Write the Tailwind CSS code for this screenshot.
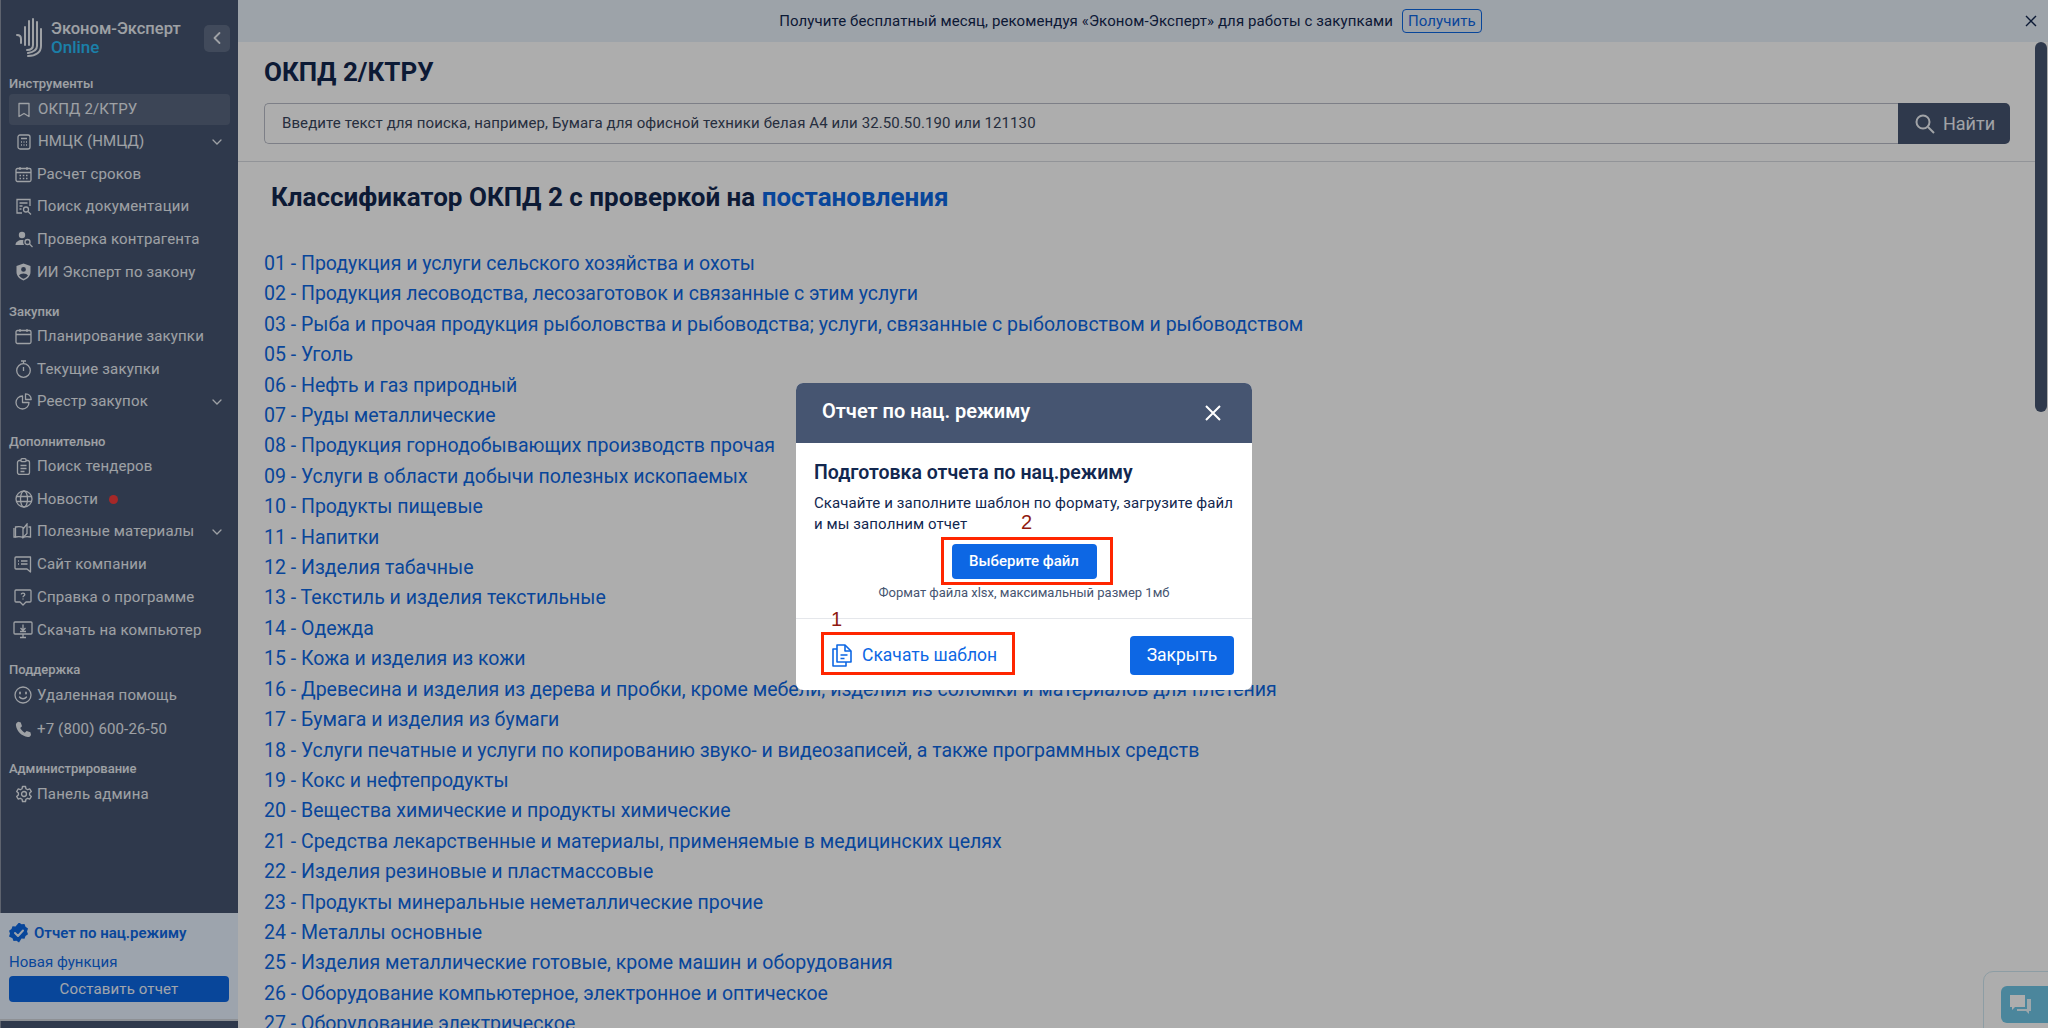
<!DOCTYPE html>
<html lang="ru">
<head>
  <meta charset="UTF-8" />
  <title>ОКПД 2/КТРУ</title>
  <script src="https://cdn.jsdelivr.net/npm/@tailwindcss/browser@4"></script>
</head>
<body class="font-['Roboto',sans-serif] text-[#12274f] bg-white">
<div class="relative flex h-[1028px] w-[2048px] overflow-hidden">

  <!-- sidebar -->
  <aside class="w-[238px] shrink-0 h-full bg-[#465571] border-l border-[#8b93a3] flex flex-col text-[#e9edf3]">
    <div class="flex items-center h-[74px] pl-[15px] pr-[8px] pt-[2px]">
      <svg class="w-[28px] h-[40px] shrink-0" viewBox="0 0 28 40" fill="none" stroke="#e9edf3" stroke-width="2" stroke-linecap="round">
        <path d="M1 17c2 0 4 1 4 4v4"/><path d="M9 9v18"/><path d="M13 3v24"/><path d="M17 1v26c0 3-2 5-6 5"/><path d="M21 4v24c0 4-3 6-9 7"/><path d="M25 11v17c0 6-5 10-13 10"/>
      </svg>
      <div class="ml-[7px] flex-1 leading-[19px] text-[16.500px] font-medium">
        <div>Эконом-Эксперт</div>
        <div class="text-[#28bdf8] text-[17px]">Online</div>
      </div>
      <div class="w-[26px] h-[27px] rounded-[5px] bg-white/15 flex items-center justify-center">
        <svg class="w-[14px] h-[14px]" viewBox="0 0 14 14" fill="none" stroke="#e9edf3" stroke-width="1.8" stroke-linecap="round" stroke-linejoin="round"><path d="M9.5 2 4.5 7l5 5"/></svg>
      </div>
    </div>

    <div class="px-[8px] text-[15px] tracking-[0.15px]">
      <div class="h-[18px] leading-[20px] text-[13px] font-medium tracking-normal">Инструменты</div>
      <div class="flex items-center h-[31px] mt-[2px] rounded-[4px] bg-white/10 pl-[6px]">
        <svg class="w-[16px] h-[16px] mr-[6px] ml-[1px]" viewBox="0 0 16 16" fill="none" stroke="currentColor" stroke-width="1.3"><path d="M3 1.5h10v13L8 11.5l-5 3z" stroke-linejoin="round"/></svg>
        <span>ОКПД 2/КТРУ</span>
      </div>
      <div class="flex items-center h-[33px] pl-[6px]">
        <svg class="w-[16px] h-[16px] mr-[6px] ml-[1px]" viewBox="0 0 16 16" fill="none" stroke="currentColor" stroke-width="1.3"><rect x="2" y="1" width="12" height="14" rx="2"/><path d="M5 4.5h6M5 8h1M7.5 8h1M10 8h1M5 11h1M7.5 11h1M10 11h1"/></svg>
        <span>НМЦК (НМЦД)</span>
        <svg class="ml-auto mr-[7px] w-[12px] h-[12px]" viewBox="0 0 12 12" fill="none" stroke="currentColor" stroke-width="1.3" stroke-linecap="round"><path d="m2 4 4 4 4-4"/></svg>
      </div>
      <div class="flex items-center h-[32px] pl-[6px]">
        <svg class="w-[17px] h-[17px] mr-[5px]" viewBox="0 0 17 17" fill="none" stroke="currentColor" stroke-width="1.3"><rect x="1" y="2.5" width="15" height="13" rx="1.5"/><path d="M1 6.500h15M5 1v3M12 1v3M4.500 9.500h1.500M7.800 9.500h1.500M11 9.500h1.500M4.500 12.500h1.500M7.800 12.500h1.500M11 12.500h1.500"/></svg>
        <span>Расчет сроков</span>
      </div>
      <div class="flex items-center h-[33px] pl-[6px]">
        <svg class="w-[17px] h-[17px] mr-[5px]" viewBox="0 0 17 17" fill="none" stroke="currentColor" stroke-width="1.3"><path d="M7 15H2V1.500h13V8"/><path d="M4.500 5h8M4.500 8h3M4.500 11h2"/><circle cx="11" cy="11.500" r="2.500"/><path d="m13 13.500 3 3"/></svg>
        <span>Поиск документации</span>
      </div>
      <div class="flex items-center h-[33px] pl-[6px]">
        <svg class="w-[18px] h-[17px] mr-[4px]" viewBox="0 0 18 17" fill="currentColor"><circle cx="7" cy="4" r="3.200"/><path d="M0.500 14c0-3 3-5 6.500-5 0.700 0 1 .1 1.500.2-.6 1.500-.3 3.400.6 4.800z"/><g fill="none" stroke="currentColor" stroke-width="1.300"><circle cx="12.500" cy="11" r="2.500"/><path d="m14.500 13 3 3"/></g></svg>
        <span>Проверка контрагента</span>
      </div>
      <div class="flex items-center h-[32px] pl-[6px]">
        <svg class="w-[17px] h-[18px] mr-[5px]" viewBox="0 0 17 18" fill="currentColor"><path fill-rule="evenodd" d="M8.500 0.500 15.500 3v6c0 4-3 7-7 8.500-4-1.500-7-4.500-7-8.500V3zM8.500 4a2.400 2.400 0 1 0 0 4.800 2.400 2.400 0 0 0 0-4.800M4 12.500c1 1.500 3 2.800 4.500 3.300 1.500-.5 3.500-1.800 4.500-3.300-.7-1.200-2.600-2-4.500-2s-3.800.8-4.500 2"/></svg>
        <span>ИИ Эксперт по закону</span>
      </div>

      <div class="h-[18px] leading-[20px] mt-[14px] text-[13px] font-medium tracking-normal">Закупки</div>
      <div class="flex items-center h-[33px] pl-[6px]">
        <svg class="w-[17px] h-[17px] mr-[5px]" viewBox="0 0 17 17" fill="none" stroke="currentColor" stroke-width="1.300"><rect x="1" y="2.500" width="15" height="13" rx="1.500"/><path d="M1 6.500h15M5 1v3M12 1v3"/></svg>
        <span>Планирование закупки</span>
      </div>
      <div class="flex items-center h-[32px] pl-[6px]">
        <svg class="w-[17px] h-[18px] mr-[5px]" viewBox="0 0 17 18" fill="none" stroke="currentColor" stroke-width="1.300"><circle cx="8.500" cy="10.500" r="6.800"/><path d="M6 1h5M8.500 1v2.500M8.500 7v4"/></svg>
        <span>Текущие закупки</span>
      </div>
      <div class="flex items-center h-[33px] pl-[6px]">
        <svg class="w-[17px] h-[17px] mr-[5px]" viewBox="0 0 17 17" fill="none" stroke="currentColor" stroke-width="1.300" stroke-linejoin="round"><path d="M7.500 3a6.500 6.500 0 1 0 6.500 6.500H7.500z"/><path d="M10.500 0.800a5.500 5.500 0 0 1 5.700 5.700h-5.700z"/></svg>
        <span>Реестр закупок</span>
        <svg class="ml-auto mr-[7px] w-[12px] h-[12px]" viewBox="0 0 12 12" fill="none" stroke="currentColor" stroke-width="1.300" stroke-linecap="round"><path d="m2 4 4 4 4-4"/></svg>
      </div>

      <div class="h-[18px] leading-[20px] mt-[14px] text-[13px] font-medium tracking-normal">Дополнительно</div>
      <div class="flex items-center h-[33px] pl-[6px]">
        <svg class="w-[17px] h-[17px] mr-[5px]" viewBox="0 0 17 17" fill="none" stroke="currentColor" stroke-width="1.300"><rect x="2.500" y="2.500" width="12" height="14" rx="2"/><rect x="6" y="0.700" width="5" height="3" rx="1" fill="#465571"/><path d="M5.500 7.500h6M5.500 10.500h6M5.500 13.500h4"/></svg>
        <span>Поиск тендеров</span>
      </div>
      <div class="flex items-center h-[32px] pl-[6px]">
        <svg class="w-[18px] h-[18px] mr-[4px]" viewBox="0 0 18 18" fill="none" stroke="currentColor" stroke-width="1.300"><circle cx="9" cy="9" r="8"/><ellipse cx="9" cy="9" rx="3.500" ry="8"/><path d="M1.500 6.500h15M1.500 11.500h15"/></svg>
        <span>Новости</span>
        <span class="ml-[11px] w-[9px] h-[9px] rounded-full bg-[#f53b3b]"></span>
      </div>
      <div class="flex items-center h-[33px] pl-[4px]">
        <svg class="w-[20px] h-[17px] mr-[4px]" viewBox="0 0 20 17" fill="none" stroke="currentColor" stroke-width="1.300"><path d="M10 4.500C8 3.500 5 3.500 2.500 4v10c2.500-.5 5.500-.5 7.500.5zM10 14.500V6l4-5v9.500z"/><path d="M15.500 4h2v10c-2.500-.5-5.500-.5-7.500.5M2.500 14H1V5"/></svg>
        <span>Полезные материалы</span>
        <svg class="ml-auto mr-[7px] w-[12px] h-[12px]" viewBox="0 0 12 12" fill="none" stroke="currentColor" stroke-width="1.300" stroke-linecap="round"><path d="m2 4 4 4 4-4"/></svg>
      </div>
      <div class="flex items-center h-[33px] pl-[5px]">
        <svg class="w-[18px] h-[17px] mr-[5px]" viewBox="0 0 18 17" fill="none" stroke="currentColor" stroke-width="1.300"><path d="M2 1h14.500v15l-3.500-3H2a1 1 0 0 1-1-1V2a1 1 0 0 1 1-1z" stroke-linejoin="round"/><path d="M4 5h1M4 8h1M7 5h6.500M7 8h6.500"/></svg>
        <span>Сайт компании</span>
      </div>
      <div class="flex items-center h-[33px] pl-[5px]">
        <svg class="w-[18px] h-[17px] mr-[5px]" viewBox="0 0 18 17" fill="none" stroke="currentColor" stroke-width="1.300"><path d="M2 1h14a1 1 0 0 1 1 1v10a1 1 0 0 1-1 1h-4l-3 3-3-3H2a1 1 0 0 1-1-1V2a1 1 0 0 1 1-1z" stroke-linejoin="round"/><path d="M7.200 5.300C7.400 3.600 10.800 3.700 10.800 5.500c0 1.300-1.800 1.300-1.800 2.700M9 9.500v1"/></svg>
        <span>Справка о программе</span>
      </div>
      <div class="flex items-center h-[32px] pl-[4px]">
        <svg class="w-[20px] h-[18px] mr-[4px]" viewBox="0 0 20 18" fill="none" stroke="currentColor" stroke-width="1.300"><rect x="1" y="1" width="18" height="12" rx="1"/><path d="M7 16.500h6M10 13v3.500"/><path d="M10 3.500v5.500M7.500 7l2.500 2.500L12.500 7M7 10.500h6"/></svg>
        <span>Скачать на компьютер</span>
      </div>

      <div class="h-[19px] leading-[20px] mt-[14px] text-[13px] font-medium tracking-normal">Поддержка</div>
      <div class="flex items-center h-[32px] pl-[5px]">
        <svg class="w-[18px] h-[18px] mr-[5px]" viewBox="0 0 18 18" fill="none" stroke="currentColor" stroke-width="1.300"><circle cx="9" cy="9" r="8"/><path d="M5.500 11c1.800 2.300 5.200 2.300 7 0" stroke-linecap="round"/><path d="M6 6.500v1M12 6.500v1" stroke-width="1.800" stroke-linecap="round"/></svg>
        <span>Удаленная помощь</span>
      </div>
      <div class="flex items-center h-[36px] pl-[6px]">
        <svg class="w-[17px] h-[17px] mr-[5px]" viewBox="0 0 17 17" fill="currentColor"><path d="M3.500 0.800 5.800 1.500 7 5.300 5.200 7c.9 1.900 2.500 3.500 4.600 4.700l1.800-1.700 3.800 1.200.6 2.500c-.4 1.400-1.700 2.500-3.200 2.300C6.500 15.300 1.500 10 .9 4.100.8 2.600 2 1.200 3.500.8z"/></svg>
        <span>+7 (800) 600-26-50</span>
      </div>

      <div class="h-[19px] leading-[20px] mt-[12px] text-[13px] font-medium tracking-normal">Администрирование</div>
      <div class="flex items-center h-[32px] pl-[6px]">
        <svg class="w-[18px] h-[18px] mr-[4px]" viewBox="0 0 24 24" fill="none" stroke="currentColor" stroke-width="1.800" stroke-linejoin="round"><circle cx="12" cy="12" r="3.300"/><path d="M10 2h4l.6 3 2.300 1.300 2.900-1 2 3.500-2.300 2v2.400l2.300 2-2 3.500-2.900-1-2.300 1.300-.6 3h-4l-.6-3-2.300-1.300-2.900 1-2-3.500 2.300-2v-2.400l-2.300-2 2-3.500 2.900 1L9.400 5z"/></svg>
        <span>Панель админа</span>
      </div>
    </div>

    <div class="mt-auto mb-[7px] h-[108px] -ml-px bg-[#e8f2ff] border-b-2 border-[#d0d4da] px-[9px] pt-[8px]">
      <div class="flex items-center text-[#0d67e4] font-semibold text-[15px] h-[24px]">
        <svg class="w-[20px] h-[20px] mr-[5px]" viewBox="0 0 20 20"><path fill="#0d67e4" d="m10 0 2.500 1.700 3-.2 1 2.800 2.500 1.700-1 2.900 1 2.900-2.500 1.700-1 2.800-3-.2L10 20l-2.500-1.700-3 .2-1-2.800L0 14l1-2.900L0 8.200l2.500-1.700 1-2.800 3 .2z" transform="translate(0 -0.500)"/><path d="m6 10 3 3 5-5.500" fill="none" stroke="#e8f2ff" stroke-width="2" stroke-linecap="round" stroke-linejoin="round"/></svg>
        <span>Отчет по нац.режиму</span>
      </div>
      <div class="text-[#0d67e4] text-[15px] mt-[7px] leading-[20px]">Новая функция</div>
      <div class="mt-[4px] h-[26px] rounded-[4px] bg-[#0d67e4] text-[#eef4fc] text-[15px] tracking-[0.15px] flex items-center justify-center">Составить отчет</div>
    </div>
  </aside>

  <!-- main -->
  <main class="flex-1 min-w-0 flex flex-col">
    <div class="relative h-[42px] shrink-0 bg-[#e8f0fa] flex items-center justify-center pr-[25px] text-[15px] tracking-[0.1px] text-[#12274f]">
      <span class="mr-[9px]">Получите бесплатный месяц, рекомендуя «Эконом-Эксперт» для работы с закупками</span>
      <span class="h-[24px] px-[5px] rounded-[4px] border border-[#0d67e4] text-[#0d67e4] flex items-center">Получить</span>
      <svg class="absolute right-[11px] top-[15px] w-[12px] h-[12px]" viewBox="0 0 12 12" stroke="#12274f" stroke-width="1.400"><path d="m1 1 10 10M11 1 1 11"/></svg>
    </div>

    <div class="relative flex-1 min-h-0 overflow-hidden pr-[13px]">
      <div class="px-[26px] pt-[15px] h-[120px] border-b border-[#d8dbe1]">
        <h1 class="text-[26px] font-bold leading-[30px]">ОКПД 2/КТРУ</h1>
        <div class="flex h-[41px] mt-[16px] -mr-px">
          <div class="flex-1 border border-[#b9bcc7] border-r-0 rounded-l-[5px] flex items-center pl-[17px] text-[15px] tracking-[0.1px] text-[#39455c]">Введите текст для поиска, например, Бумага для офисной техники белая А4 или 32.50.50.190 или 121130</div>
          <div class="w-[112px] bg-[#465571] rounded-r-[5px] flex items-center justify-center text-[#eef1f6] text-[18px]">
            <svg class="w-[20px] h-[20px] mr-[8px] ml-[2px]" viewBox="0 0 20 20" fill="none" stroke="currentColor" stroke-width="2"><circle cx="8" cy="8" r="6.500"/><path d="m13 13 6 6"/></svg>
            <span>Найти</span>
          </div>
        </div>
      </div>

      <div class="px-[26px]">
        <h2 class="mt-[20px] ml-[7px] text-[26px] font-bold leading-[30px]">Классификатор ОКПД 2 с проверкой на <a class="text-[#0d67e4]">постановления</a></h2>
        <ul class="mt-[37px] text-[#0d67e4] text-[19.500px] leading-[30.400px]">
          <li>01 - Продукция и услуги сельского хозяйства и охоты</li>
          <li>02 - Продукция лесоводства, лесозаготовок и связанные с этим услуги</li>
          <li>03 - Рыба и прочая продукция рыболовства и рыбоводства; услуги, связанные с рыболовством и рыбоводством</li>
          <li>05 - Уголь</li>
          <li>06 - Нефть и газ природный</li>
          <li>07 - Руды металлические</li>
          <li>08 - Продукция горнодобывающих производств прочая</li>
          <li>09 - Услуги в области добычи полезных ископаемых</li>
          <li>10 - Продукты пищевые</li>
          <li>11 - Напитки</li>
          <li>12 - Изделия табачные</li>
          <li>13 - Текстиль и изделия текстильные</li>
          <li>14 - Одежда</li>
          <li>15 - Кожа и изделия из кожи</li>
          <li>16 - Древесина и изделия из дерева и пробки, кроме мебели; изделия из соломки и материалов для плетения</li>
          <li>17 - Бумага и изделия из бумаги</li>
          <li>18 - Услуги печатные и услуги по копированию звуко- и видеозаписей, а также программных средств</li>
          <li>19 - Кокс и нефтепродукты</li>
          <li>20 - Вещества химические и продукты химические</li>
          <li>21 - Средства лекарственные и материалы, применяемые в медицинских целях</li>
          <li>22 - Изделия резиновые и пластмассовые</li>
          <li>23 - Продукты минеральные неметаллические прочие</li>
          <li>24 - Металлы основные</li>
          <li>25 - Изделия металлические готовые, кроме машин и оборудования</li>
          <li>26 - Оборудование компьютерное, электронное и оптическое</li>
          <li>27 - Оборудование электрическое</li>
        </ul>
      </div>

      <!-- scrollbar -->
      <div class="absolute right-[1px] top-0 w-[12px] h-[370px] rounded-full bg-[#465571]"></div>
    </div>
  </main>

  <!-- chat widget -->
  <div class="absolute left-[1983px] top-[971px] w-[80px] h-[80px] rounded-[10px] border border-[#d0e8f2]">
    <div class="absolute left-[17px] top-[14px] w-[60px] h-[37px] rounded-[6px] bg-[#6fc6e6] flex pl-[8px] pt-[8px]">
      <svg class="w-[23px] h-[21px]" viewBox="0 0 23 21" fill="white"><path d="M1 1h15v12H6l-3 3v-3H1z"/><path d="M18 5h4v12h-2v3l-3-3H8v-2h10z" fill="#e8f6fc"/></svg>
    </div>
  </div>

  <!-- modal backdrop -->
  <div class="absolute inset-0 bg-black/32"></div>

  <!-- modal -->
  <div class="absolute left-[796px] top-[383px] w-[456px] h-[307px] rounded-[7px] bg-white overflow-hidden flex flex-col">
    <div class="h-[60px] shrink-0 bg-[#465571] flex items-center pl-[26px] pr-[31px] pb-[4px] text-white">
      <span class="text-[20px] font-semibold">Отчет по нац. режиму</span>
      <svg class="ml-auto mt-[3px] w-[16px] h-[16px]" viewBox="0 0 16 16" stroke="white" stroke-width="2"><path d="m1 1 14 14M15 1 1 15"/></svg>
    </div>
    <div class="px-[18px] pt-[18px]">
      <div class="text-[19.500px] font-semibold leading-[24px] text-[#12274f]">Подготовка отчета по нац.режиму</div>
      <p class="mt-[8px] text-[15px] leading-[21px] tracking-[0.1px] text-[#12274f]">Скачайте и заполните шаблон по формату, загрузите файл<br>и мы заполним отчет</p>
      <div class="mt-[9px] mx-auto w-[145px] h-[35px] rounded-[4px] bg-[#0d67e4] text-white text-[15px] font-medium flex items-center justify-center">Выберите файл</div>
      <div class="mt-[5px] text-center text-[13px] text-[#465571] leading-[18px]">Формат файла xlsx, максимальный размер 1мб</div>
    </div>
    <div class="mt-[16px] border-t border-[#e5e7eb] flex items-center justify-between pl-[36px] pr-[18px] pt-[17px]">
      <div class="flex items-center text-[#0d67e4] text-[17.500px]">
        <svg class="w-[20px] h-[23px] mr-[10px] -mt-[1px]" viewBox="0 0 20 23" fill="none" stroke="currentColor" stroke-width="1.600" stroke-linejoin="round"><path d="M5 1h8l6 6v11H5z"/><path d="M5 5H1v17h13v-4"/><path d="M13 1v6h6M8.500 11h7M8.500 14.500h4"/></svg>
        <span>Скачать шаблон</span>
      </div>
      <div class="w-[104px] h-[39px] rounded-[4px] bg-[#0d67e4] text-white text-[17.500px] flex items-center justify-center">Закрыть</div>
    </div>
  </div>

  <!-- annotations -->
  <div class="absolute left-[941px] top-[537px] w-[172px] h-[48px] border-[3px] border-[#ff2600]"></div>
  <div class="absolute left-[821px] top-[632px] w-[194px] h-[43px] border-[3px] border-[#ff2600]"></div>
  <div class="absolute left-[1021px] top-[510px] font-['Liberation_Sans',sans-serif] text-[20px] leading-[24px] text-[#8f1a10]">2</div>
  <div class="absolute left-[831px] top-[607px] font-['Liberation_Sans',sans-serif] text-[20px] leading-[24px] text-[#8f1a10]">1</div>
</div>
</body>
</html>
